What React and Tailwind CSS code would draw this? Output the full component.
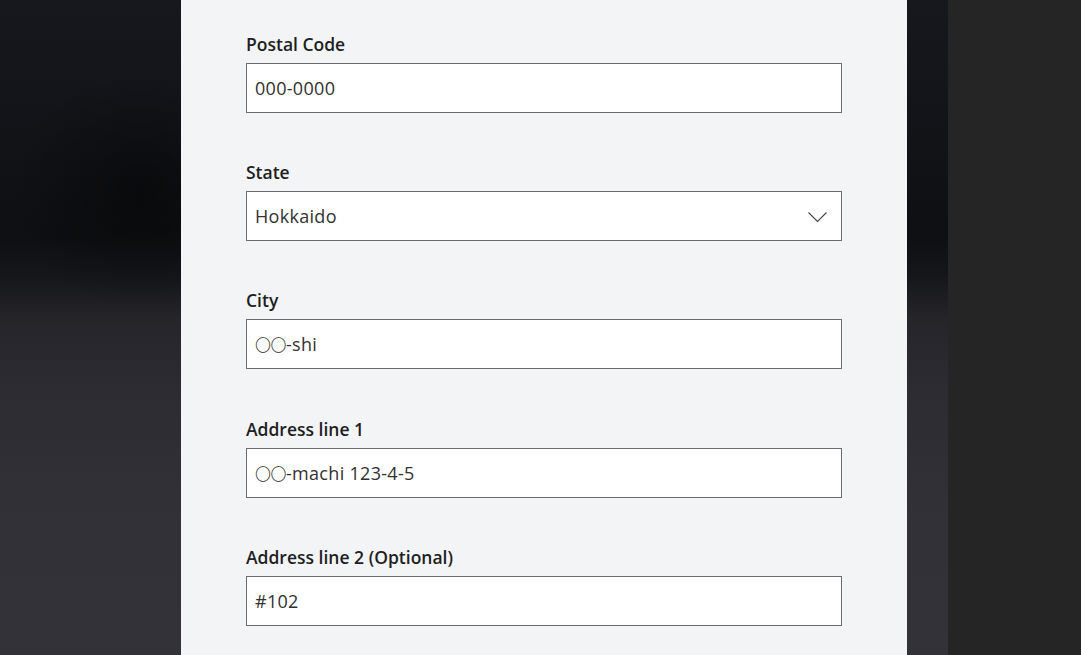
import React from "react";

const fields = [
  { label: "Postal Code", value: "000-0000" },
  { label: "State", value: "Hokkaido", select: true },
  { label: "City", circles: true, value: "-shi", extra: 1 },
  { label: "Address line 1", circles: true, value: "-machi 123-4-5" },
  { label: "Address line 2 (Optional)", value: "#102" },
];

function Field({ label, value, select, circles, extra }) {
  return (
    <div className={extra ? "mb-[47px]" : "mb-[46px]"}>
      <div className="h-6 mb-2 text-[17.5px] leading-6 font-semibold text-[#201f1e] translate-y-[1px]">{label}</div>
      <div className="h-[50px] border border-[#6b6b6b] bg-white flex items-center pl-2 pr-[14px]">
        <span className="flex-1 text-[18px] text-[#323130] leading-6 tracking-[0.3px]">
          {circles && (
            <span className="font-extralight text-[16px] tracking-[-0.5px]" style={{ fontFamily: '"Noto Sans CJK JP", sans-serif' }}>
              〇〇
            </span>
          )}
          {value}
        </span>
        {select && (
          <svg width="19" height="11" viewBox="0 0 19 11" className="mt-[3px]">
            <polyline points="0.5,0.5 9.5,9.5 18.5,0.5" fill="none" stroke="#444" strokeWidth="1.1" />
          </svg>
        )}
      </div>
    </div>
  );
}

export default function App() {
  return (
    <div
      className="w-[1081px] h-[655px] overflow-hidden flex"
      style={{ fontFamily: '"Open Sans", "Noto Sans", "Noto Sans CJK JP", sans-serif' }}
    >
      <div className="w-[948px] h-full flex bg-[linear-gradient(to_bottom,#17181d_0%,#121317_22%,#0e0f12_36%,#15161a_42%,#25252a_49%,#2d2c32_60%,#323137_80%,#333238_100%)] relative">
        <div className="absolute inset-0 bg-[radial-gradient(ellipse_130px_120px_at_140px_190px,rgba(0,0,0,0.4),transparent)]"></div>
        <div className="w-[181px] shrink-0"></div>
        <div className="w-[726px] shrink-0 h-full bg-[#f3f4f6] pt-[31px] pl-[65px] pr-[65px] relative">
          {fields.map((f) => (
            <Field key={f.label} {...f} />
          ))}
        </div>
        <div className="w-[41px] shrink-0"></div>
      </div>
      <div className="flex-1 h-full bg-[#252525]"></div>
    </div>
  );
}
